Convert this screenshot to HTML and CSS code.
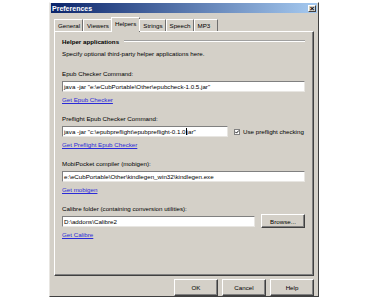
FILE: index.html
```html
<!DOCTYPE html>
<html lang="en">
<head>
    <meta charset="UTF-8">
    <title>Preferences</title>
    <link rel="stylesheet" href="styles.css">
</head>
<body>
    <div class="window">
        <div class="titlebar">
            <span class="title">Preferences</span>
            <span class="close">&#215;</span>
        </div>

        <div class="tabs">
            <div class="tab">General</div>
            <div class="tab">Viewers</div>
            <div class="tab active">Helpers</div>
            <div class="tab">Strings</div>
            <div class="tab">Speech</div>
            <div class="tab mp3">MP3</div>
        </div>

        <div class="panel">
            <div class="heading"><span>Helper applications</span></div>
            <p class="intro">Specify optional third-party helper applications here.</p>

            <div class="group">
                <div class="label">Epub Checker Command:</div>
                <div class="row">
                    <div class="field">java -jar "e:\eCubPortable\Other\epubcheck-1.0.5.jar"</div>
                </div>
                <a class="link" href="#">Get Epub Checker</a>
            </div>

            <div class="group">
                <div class="label">Preflight Epub Checker Command:</div>
                <div class="row">
                    <div class="field short">java -jar "c:\epubpreflight\epubpreflight-0.1.0<span class="caret"></span>jar"</div>
                    <div class="check">
                        <svg width="6" height="6" viewBox="0 0 6 6">
                            <rect x="0.5" y="0.5" width="5" height="5" fill="#fff" stroke="#808080"/>
                            <path d="M1.3 2.8 L2.5 4.1 L4.8 1.5" fill="none" stroke="#000" stroke-width="0.9"/>
                        </svg>
                        <span>Use preflight checking</span>
                    </div>
                </div>
                <a class="link" href="#">Get Preflight Epub Checker</a>
            </div>

            <div class="group">
                <div class="label">MobiPocket compiler (mobigen):</div>
                <div class="row">
                    <div class="field">e:\eCubPortable\Other\kindlegen_win32\kindlegen.exe</div>
                </div>
                <a class="link" href="#">Get mobigen</a>
            </div>

            <div class="group">
                <div class="label">Calibre folder (containing conversion utilities):</div>
                <div class="row">
                    <div class="field">D:\addons\Calibre2</div>
                    <button class="btn browse">Browse...</button>
                </div>
                <a class="link" href="#">Get Calibre</a>
            </div>
        </div>

        <div class="buttons">
            <button class="btn">OK</button>
            <button class="btn">Cancel</button>
            <button class="btn">Help</button>
        </div>
    </div>
</body>
</html>
```

FILE: styles.css
```css
* { box-sizing: border-box; }
html, body { overflow: hidden; }
body {
    margin: 0;
    height: 297px;
    background: #fff;
    font-family: "Liberation Sans", Arial, sans-serif;
    font-size: 6.2px;
    color: #000;
}

.window {
    margin: 2px 0 0 49px;
    width: 270px;
    height: 295px;
    padding: 0 1px;
    background: #d4d0c8;
    border: 1px solid;
    border-color: #fff #404040 #404040 #e8e6e2;
}

.titlebar {
    height: 10px;
    padding: 0 1px 0 1px;
    display: flex;
    align-items: center;
    justify-content: space-between;
    background: linear-gradient(to right, #0a246a, #a6caf0);
    color: #fff;
    font-weight: bold;
    font-size: 7px;
}
.close {
    width: 8px;
    height: 7px;
    background: #d4d0c8;
    border: 1px solid;
    border-color: #fff #404040 #404040 #fff;
    color: #000;
    font-size: 8px;
    line-height: 5px;
    text-align: center;
}

.tabs {
    display: flex;
    align-items: flex-end;
    height: 14px;
    margin: 4px 0 0 3px;
    position: relative;
    z-index: 1;
}
.tab {
    height: 12px;
    padding: 0 2px 0 3px;
    line-height: 11px;
    border: 1px solid;
    border-bottom: none;
    border-color: #fff #6f6f6f transparent #fff;
}
.tab.active {
    height: 15px;
    margin: 0 -1px -1px;
    padding: 0 3px;
    line-height: 12px;
    background: #d4d0c8;
}
.tab.mp3 { padding-right: 7px; }

.panel {
    height: 245px;
    margin: 0 3px;
    padding: 5px 8px 0 7px;
    border: 1px solid;
    border-color: #fff #404040 #404040 #fff;
    box-shadow: inset -1px -1px 0 #808080;
}

.heading {
    display: flex;
    align-items: center;
    height: 8px;
    font-weight: bold;
}
.heading::after {
    content: "";
    flex: 1;
    margin-left: 5px;
    border-top: 1px solid #a0a0a0;
    border-bottom: 1px solid #fff;
}
.intro {
    margin: 5px 0 0;
    line-height: 8px;
}

.group { margin-top: 12px; }
.group + .group { margin-top: 11px; }
.label { line-height: 8px; }
.link {
    display: inline-block;
    margin-top: 4px;
    line-height: 8px;
    color: #2a2ad8;
    text-decoration: underline;
}

.row {
    display: flex;
    align-items: center;
    height: 11px;
    margin-top: 3px;
}
.field {
    flex: 1;
    height: 11px;
    padding: 0 1px;
    line-height: 9px;
    background: #fff;
    border: 1px solid;
    border-color: #808080 #e8e6e2 #e8e6e2 #808080;
    white-space: nowrap;
    overflow: hidden;
}
.field.short { flex: none; width: 166px; }
.caret {
    display: inline-block;
    width: 1px;
    height: 7px;
    margin: 0 0 -1px;
    background: #000;
}

.check {
    display: flex;
    align-items: center;
    gap: 3px;
    margin-left: 6px;
    white-space: nowrap;
}
.check svg { display: block; }

.btn {
    height: 17px;
    width: 44px;
    padding: 0;
    background: #d4d0c8;
    border: 1px solid;
    border-color: #fff #404040 #404040 #fff;
    box-shadow: inset -1px -1px 0 #808080;
    font-family: inherit;
    font-size: 6.2px;
    color: #000;
}
.btn.browse {
    height: 14px;
    margin: -2px 0 -1px 6px;
}

.buttons {
    display: flex;
    justify-content: flex-end;
    gap: 4px;
    margin: 3px 3px 0 0;
}
```
